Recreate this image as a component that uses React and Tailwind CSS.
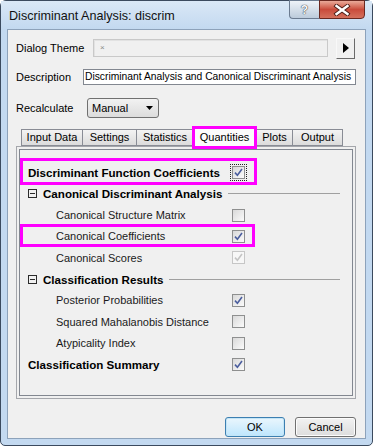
import React from "react"

const Check = ({ checked, disabled, focus }) => {
    const box = (
        <span className={`flex h-[13px] w-[13px] items-center justify-center border ${disabled ? 'border-[#c6c6c6] bg-[#f7f7f7]' : 'border-[#8e8f8f] bg-gradient-to-br from-[#d9d9d9] to-[#fbfbfb]'}`}>
            {checked && (
                <svg width="9" height="9" viewBox="0 0 9 9">
                    <path d="M1 4.6 L3.4 7.2 L8 1" fill="none" stroke={disabled ? '#c4c4c4' : '#4b5e9e'} strokeWidth="1.6" />
                </svg>
            )}
        </span>
    )
    if (!focus) return box
    return <span className="border border-dotted border-[#222] p-[1px] -m-[2px]">{box}</span>
}

const Item = ({ label, bold, child, checked, disabled, focus, mark }) => (
    <div className="relative flex h-[21.33px] items-center">
        <div className={`w-[212px] ${child ? 'pl-[36px] text-[#1a1a1a]' : 'pl-[8px] font-bold text-[11.6px]'}`}>{label}</div>
        <Check checked={checked} disabled={disabled} focus={focus} />
        {mark === 'big' && <div className="absolute left-0 top-[-4px] h-[27px] w-[237px] border-[3px] border-[#ff00ff]" />}
        {mark === 'small' && <div className="absolute left-0 top-[-2px] h-[23px] w-[235px] border-[3px] border-[#ff00ff]" />}
    </div>
)

const Group = ({ label }) => (
    <div className="flex h-[21.33px] items-center pl-[8px] pr-[12px]">
        <span className="flex h-[9px] w-[9px] items-center justify-center border border-[#2b2b2b]">
            <span className="h-px w-[5px] bg-[#2b2b2b]" />
        </span>
        <span className="ml-[6px] font-bold text-[11.6px]">{label}</span>
        <span className="ml-[6px] h-px flex-1 bg-[#a0a0a0]" />
    </div>
)

const tabs = [
    { name: 'Input Data', w: 'w-[62px]' },
    { name: 'Settings', w: 'w-[55px]' },
    { name: 'Statistics', w: 'w-[58px]' },
    { name: 'Quantities', w: 'w-[65px]', active: true },
    { name: 'Plots', w: 'w-[37px]' },
    { name: 'Output', w: 'w-[51px]' },
]

export default function App() {
    return (
        <div className="h-[446px] w-[373px] overflow-hidden bg-white font-['Liberation_Sans',Arial,sans-serif] text-[11px] text-black">
            <div className="flex h-[446px] w-[373px] flex-col rounded-[6px] rounded-b-[5px] border border-[#3b4a5e] bg-[#c3d9f0]">
                {/* title bar */}
                <div className="flex h-[28px] items-start bg-gradient-to-b from-[#dae8f6] to-[#c3d9f0]">
                    <div className="pl-[8px] pt-[6px] text-[12.6px] text-[#111]">Discriminant Analysis: discrim</div>
                    <div className="ml-auto mr-[7px] -mt-px flex">
                        <div className="flex h-[19px] w-[30px] items-center justify-center rounded-bl-[4px] border border-r-0 border-[#6b7b90] bg-gradient-to-b from-[#eef3f8] to-[#bccbdb] text-[12px] font-bold text-[#f6f8fb] [text-shadow:0_0_1px_#333,0_0_1px_#333]">?</div>
                        <div className="flex h-[19px] w-[46px] items-center justify-center rounded-br-[4px] border border-[#6a2820] bg-gradient-to-b from-[#e9a999] via-[#c94b3b] to-[#d4705d]">
                            <svg width="18" height="12" viewBox="0 0 18 12">
                                <path d="M3.5 2 L14.5 10 M14.5 2 L3.5 10" stroke="#4a1d17" strokeWidth="4.2" strokeLinecap="square" />
                                <path d="M3.5 2 L14.5 10 M14.5 2 L3.5 10" stroke="#ffffff" strokeWidth="2.4" strokeLinecap="square" />
                            </svg>
                        </div>
                    </div>
                </div>

                {/* content */}
                <div className="mx-[6px] flex h-[410px] flex-col border border-[#8da2ba] bg-[#f0f0f0]">
                    <div className="mt-[7px] flex h-[22px] items-center pl-[8px]">
                        <div className="w-[77px]">Dialog Theme</div>
                        <div className="flex h-[18px] w-[235px] items-center border border-[#c9c9c9] bg-[#f0f0f0] pl-[6px] shadow-[inset_1px_1px_0_#e2e2e2]">
                            <span className="text-[8px] text-[#888]">×</span>
                        </div>
                        <div className="ml-[8px] flex h-[21px] w-[19px] items-center justify-center border border-[#f8f8f8] border-b-[#6a6a6a] border-r-[#6a6a6a] bg-[#f0f0f0]">
                            <svg width="6" height="10" viewBox="0 0 6 10"><path d="M0 0 L6 5 L0 10 Z" fill="#000" /></svg>
                        </div>
                    </div>

                    <div className="mt-[10px] flex h-[16px] items-center pl-[8px]">
                        <div className="w-[67px]">Description</div>
                        <div className="flex h-[16px] w-[273px] items-center overflow-hidden whitespace-nowrap border border-[#828790] bg-white pl-[1px] text-[10.3px]">
                            Discriminant Analysis and Canonical Discriminant Analysis
                        </div>
                    </div>

                    <div className="mt-[13px] flex h-[20px] items-center pl-[8px]">
                        <div className="w-[71px]">Recalculate</div>
                        <div className="flex h-[20px] w-[72px] items-center justify-between rounded-[3px] border border-[#707070] bg-gradient-to-b from-[#f2f2f2] to-[#dcdcdc] pl-[4px] pr-[5px]">
                            <span>Manual</span>
                            <svg width="7" height="4" viewBox="0 0 7 4"><path d="M0 0 L7 0 L3.5 4 Z" fill="#000" /></svg>
                        </div>
                    </div>

                    {/* tabs */}
                    <div className="ml-[8px] mt-[8px] flex h-[20px] items-end pl-[5px]">
                        {tabs.map((t) => (
                            <div key={t.name} className={`relative flex items-center justify-center border border-[#898c95] ${t.w} ${t.active ? 'z-10 -mx-px h-[21px] -mb-px border-b-0 bg-[#fcfcfc]' : 'h-[17px] -mr-px bg-gradient-to-b from-[#f3f3f3] to-[#dcdcdc]'}`}>
                                {t.name}
                                {t.active && <div className="absolute -left-px -top-px h-[23px] w-[65px] border-[3px] border-[#ff00ff]" />}
                            </div>
                        ))}
                    </div>
                    <div className="ml-[8px] flex h-[253px] w-[340px] border border-[#a4a6ab] bg-[#f0f0f0] p-[2px]">
                        <div className="flex-1 border border-[#828790] pt-[12px]">
                            <Item label="Discriminant Function Coefficients" bold checked focus mark="big" />
                            <Group label="Canonical Discriminant Analysis" />
                            <Item label="Canonical Structure Matrix" child />
                            <Item label="Canonical Coefficients" child checked mark="small" />
                            <Item label="Canonical Scores" child checked disabled />
                            <Group label="Classification Results" />
                            <Item label="Posterior Probabilities" child checked />
                            <Item label="Squared Mahalanobis Distance" child />
                            <Item label="Atypicality Index" child />
                            <Item label="Classification Summary" bold checked />
                        </div>
                    </div>

                    {/* buttons */}
                    <div className="mt-[18px] flex justify-end gap-[10px] pr-[9px]">
                        <div className="flex h-[20px] w-[60px] items-center justify-center rounded-[3px] border border-[#3c7fb1] bg-gradient-to-b from-[#eaf6fd] to-[#bee6fd] shadow-[inset_0_0_0_1px_#c4e5f6]">OK</div>
                        <div className="flex h-[20px] w-[61px] items-center justify-center rounded-[3px] border border-[#707070] bg-gradient-to-b from-[#f2f2f2] to-[#dddddd] shadow-[inset_0_0_0_1px_#fcfcfc]">Cancel</div>
                    </div>
                </div>
            </div>
        </div>
    )
}
